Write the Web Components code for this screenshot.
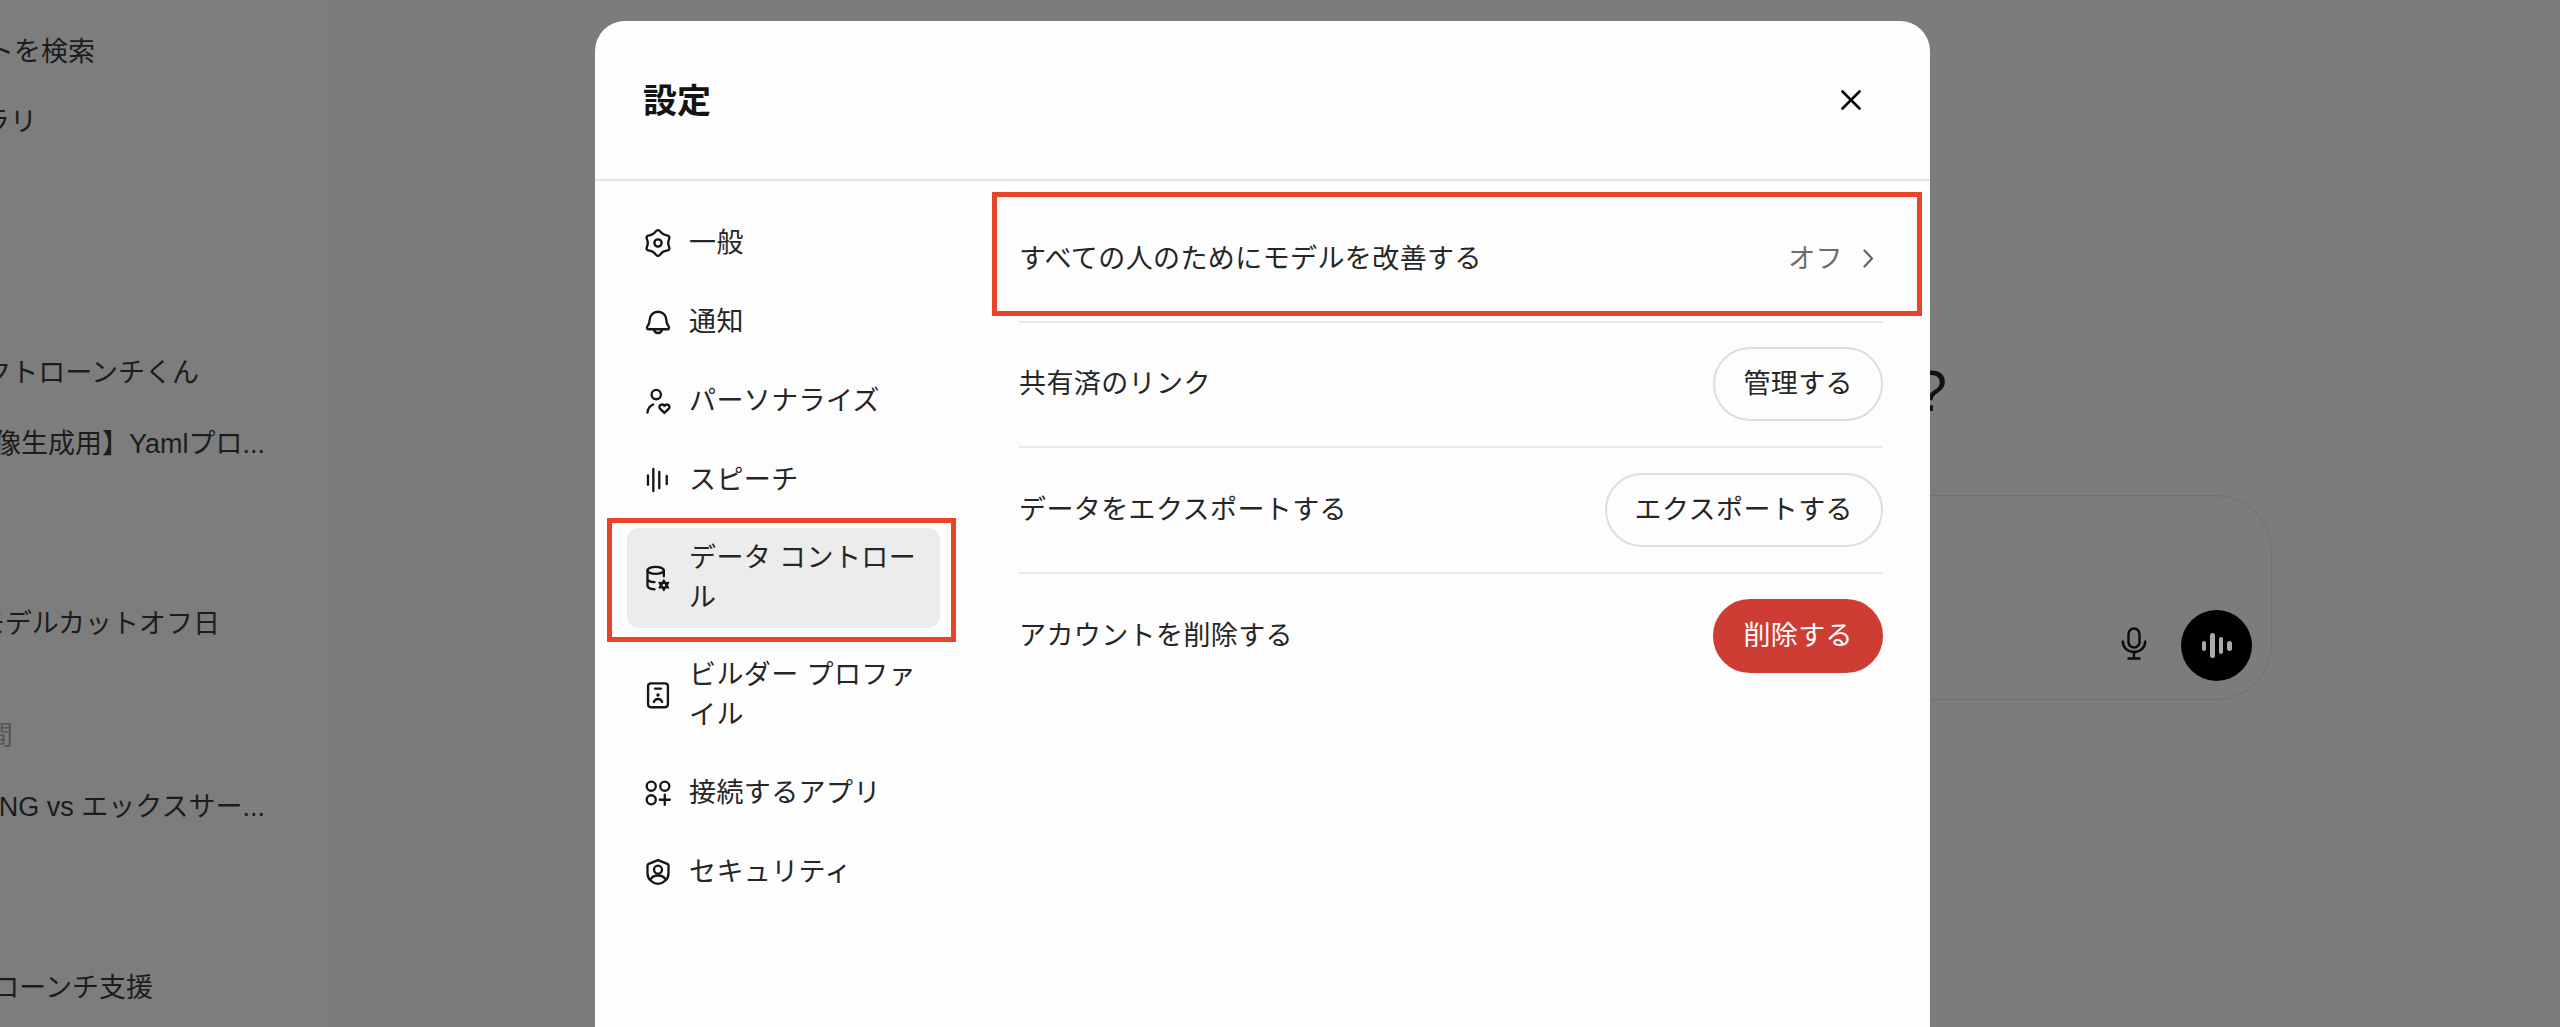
<!DOCTYPE html>
<html lang="ja">
<head>
<meta charset="utf-8">
<title>設定</title>
<style>
  html, body { margin: 0; height: 100%; overflow: hidden; background: #7c7c7c; }
  body { font-family: "Liberation Sans", "Noto Sans CJK JP", sans-serif; color: #1c1c1c; }
</style>
</head>
<body>
<app-shell>
  <chat-sidebar slot="side">
    <side-row end="95" top="32">チャットを検索</side-row>
    <side-row end="37" top="30">ライブラリ</side-row>
    <side-row end="199" top="211">プロダクトローンチくん</side-row>
    <side-row end="265" top="31">【画像生成用】Yamlプロ...</side-row>
    <side-row end="220" top="140">AIモデルカットオフ日</side-row>
    <side-row end="13" top="72" muted>過去30日間</side-row>
    <side-row end="265" top="31">SWING vs エックスサー...</side-row>
    <side-row end="153" top="141">プロダクトローンチ支援</side-row>
  </chat-sidebar>
  <chat-main slot="main"></chat-main>
  <settings-modal slot="modal">
    <nav-item icon="gear">一般</nav-item>
    <nav-item icon="bell">通知</nav-item>
    <nav-item icon="person">パーソナライズ</nav-item>
    <nav-item icon="speech">スピーチ</nav-item>
    <nav-item icon="data" selected>データ コントロール</nav-item>
    <nav-item icon="builder">ビルダー プロファイル</nav-item>
    <nav-item icon="apps">接続するアプリ</nav-item>
    <nav-item icon="shield">セキュリティ</nav-item>

    <setting-row slot="rows">すべての人のためにモデルを改善する<value-link slot="action">オフ</value-link></setting-row>
    <setting-row slot="rows">共有済のリンク<pill-button slot="action">管理する</pill-button></setting-row>
    <setting-row slot="rows">データをエクスポートする<pill-button slot="action">エクスポートする</pill-button></setting-row>
    <setting-row slot="rows" last>アカウントを削除する<pill-button slot="action" danger>削除する</pill-button></setting-row>
  </settings-modal>
</app-shell>

<script>
// 歯車の花びら形をつくる
function flowerPath() {
  const pts = [];
  for (let i = 0; i < 12; i++) {
    const a = (-90 + i * 30) * Math.PI / 180;
    const r = i % 2 ? 8.1 : 12.4;
    pts.push([12 + r * Math.cos(a), 12 + r * Math.sin(a)]);
  }
  const mid = (p, q) => ((p[0] + q[0]) / 2).toFixed(2) + ' ' + ((p[1] + q[1]) / 2).toFixed(2);
  let d = 'M' + mid(pts[11], pts[0]);
  pts.forEach((p, i) => {
    d += 'Q' + p[0].toFixed(2) + ' ' + p[1].toFixed(2) + ' ' + mid(p, pts[(i + 1) % 12]);
  });
  return d + 'Z';
}

const ICONS = {
  gear: `<path d="${flowerPath()}"/><circle cx="12" cy="12" r="3.1"/>`,
  bell: `<path d="M12 3.2a7.2 7.2 0 0 0-7.2 7.2c0 2.7-1 4.2-2 5.6-.7 1-.1 2.2 1 2.2h16.4c1.1 0 1.7-1.200 1-2.200-1-1.400-2-2.900-2-5.600A7.200 7.200 0 0 0 12 3.200z"/><path d="M8.600 18.400c.3 2 1.700 3 3.400 3s3.100-1 3.400-3"/>`,
  person: `<circle cx="10.500" cy="6.500" r="4"/><path d="M3 22c.2-3.300 1.900-5.800 4.800-7"/><path d="M17.500 22.200l-3.800-3.700c-2-2.200 1.900-5.100 3.800-2.300 1.900-2.800 5.800.1 3.800 2.300z"/>`,
  speech: `<path d="M3.400 8v8M8 2.500v19M13.100 5v14M19.500 8.500v7"/>`,
  data: `<ellipse cx="10" cy="5.500" rx="7" ry="3"/><path d="M3 5.500v13c0 1.800 2.400 3 6 3.200M17 5.500v5M3 12.500c0 1.700 2.400 3 6 3.100"/><path d="M17 13.600l1.500 2.300 2.700-.1-1.200 2.400 1.200 2.400-2.700-.2L17 22.900l-1.500-2.500-2.700.2 1.200-2.400-1.200-2.400 2.700.1z" fill="currentColor" stroke-width="1"/><circle cx="17" cy="18.200" r="1.100" fill="#ececec" stroke="none"/>`,
  builder: `<rect x="3.500" y="2" width="17" height="20.500" rx="2.500"/><path d="M9.500 6.500h5"/><circle cx="12" cy="12" r="1.500" fill="currentColor" stroke="none"/><path d="M8.500 18c.5-1.800 1.800-2.600 3.500-2.600s3 .8 3.500 2.600"/>`,
  apps: `<circle cx="6.200" cy="6.200" r="3.900"/><circle cx="17.800" cy="6.200" r="3.900"/><circle cx="6.200" cy="17.800" r="3.900"/><path d="M17.800 13.500v8.600M13.500 17.800h8.600"/>`,
  shield: `<path d="M12 1.800l8 3.200c.6.200 1 .8 1 1.500v6.500c0 5-4 8.700-9 9.200-5-.5-9-4.200-9-9.200V6.500c0-.7.4-1.300 1-1.500z"/><circle cx="12" cy="10" r="3.400"/><path d="M5.800 18c1.200-2 3.500-3 6.200-3s5 1 6.200 3"/>`
};

class AppShell extends HTMLElement {
  constructor() {
    super();
    this.attachShadow({ mode: 'open' });
    this.shadowRoot.innerHTML = `
      <style>
        :host { display: flex; width: 2560px; height: 1027px; position: relative; overflow: hidden; }
      </style>
      <slot name="side"></slot>
      <slot name="main"></slot>
      <slot name="modal"></slot>
    `;
  }
}

class ChatSidebar extends HTMLElement {
  constructor() {
    super();
    this.attachShadow({ mode: 'open' });
    this.shadowRoot.innerHTML = `
      <style>
        :host {
          display: flex; flex-direction: column; flex: none;
          width: 329px; height: 100%;
          background: #7d7d7d; border-right: 1px solid #767676;
          overflow: hidden;
        }
      </style>
      <slot></slot>
    `;
  }
}

// 行の右端(end)と上の余白(top)で置く。左側は画面外に切れる
class SideRow extends HTMLElement {
  constructor() {
    super();
    this.attachShadow({ mode: 'open' });
    this.shadowRoot.innerHTML = `
      <style>
        :host {
          display: flex; justify-content: flex-end; flex: none;
          height: 40px; line-height: 40px; font-size: 27px;
          white-space: nowrap; color: #1c1c1c;
        }
        :host([muted]) { color: #565656; }
      </style>
      <slot></slot>
    `;
  }
  connectedCallback() {
    this.style.width = this.getAttribute('end') + 'px';
    this.style.marginTop = this.getAttribute('top') + 'px';
  }
}

class ChatMain extends HTMLElement {
  constructor() {
    super();
    this.attachShadow({ mode: 'open' });
    this.shadowRoot.innerHTML = `
      <style>
        :host {
          display: flex; flex-direction: column; align-items: center;
          flex: 1; padding-top: 359px; box-sizing: border-box;
        }
        .title {
          width: 1004px; display: flex; justify-content: flex-end;
          height: 64px; line-height: 64px; font-size: 57px; color: #111;
        }
        .composer {
          width: 1654px; height: 205px; margin-top: 72px; box-sizing: border-box;
          border: 1.500px solid #707070; border-radius: 56px;
          display: flex; justify-content: flex-end; align-items: flex-end; gap: 34px;
          padding: 0 19px 18px 0;
        }
        .mic { width: 26px; height: 33px; margin-bottom: 21px; display: block; }
        .voice {
          width: 71px; height: 71px; border-radius: 50%; background: #000;
          display: flex; align-items: center; justify-content: center; gap: 4px;
        }
        .voice i { display: block; width: 4.500px; background: #aaa; border-radius: 3px; }
      </style>
      <div class="title">?</div>
      <div class="composer">
        <svg class="mic" viewBox="0 0 26 33" fill="none" stroke="#0a0a0a" stroke-width="2.400" stroke-linecap="round">
          <rect x="7.500" y="1.500" width="11" height="19" rx="5.500"/>
          <path d="M1.800 14.500c0 6.500 5 10.500 11.200 10.500s11.200-4 11.200-10.500"/>
          <path d="M13 25v6M7.500 31.500h11"/>
        </svg>
        <div class="voice"><i style="height:10px"></i><i style="height:25px"></i><i style="height:17px"></i><i style="height:10px"></i></div>
      </div>
    `;
  }
}

class SettingsModal extends HTMLElement {
  constructor() {
    super();
    this.attachShadow({ mode: 'open' });
    this.shadowRoot.innerHTML = `
      <style>
        :host {
          display: block; position: absolute; left: 595px; top: 21px;
          width: 1335px; height: 1040px;
          background: #fdfdfd; border-radius: 30px;
        }
        header {
          height: 158px; box-sizing: content-box; border-bottom: 2px solid #e6e6e6;
          display: flex; align-items: center; justify-content: space-between;
          padding: 0 69px 0 48px;
        }
        h2 { margin: 2px 0 0; font-size: 34px; font-weight: 700; color: #141414; line-height: 1; }
        .close { width: 20px; height: 20px; display: block; }
        .body { display: flex; }
        nav {
          width: 313px; margin-left: 32px; padding-top: 31px;
          display: flex; flex-direction: column; gap: 17px;
        }
        .rows { width: 864px; margin-left: 79px; padding-top: 16px; display: flex; flex-direction: column; }
        .mark { position: absolute; border: 5px solid #e8442a; box-sizing: border-box; pointer-events: none; }
        .mark.nav { left: 12px; top: 497px; width: 349px; height: 124px; }
        .mark.row { left: 397px; top: 171px; width: 930px; height: 124px; }
      </style>
      <header>
        <h2>設定</h2>
        <svg class="close" viewBox="0 0 20 20" fill="none" stroke="#0a0a0a" stroke-width="2.600" stroke-linecap="round"><path d="M1.500 1.500l17 17M18.500 1.500l-17 17"/></svg>
      </header>
      <div class="body">
        <nav><slot></slot></nav>
        <div class="rows"><slot name="rows"></slot></div>
      </div>
      <div class="mark nav"></div>
      <div class="mark row"></div>
    `;
  }
}

class NavItem extends HTMLElement {
  constructor() {
    super();
    this.attachShadow({ mode: 'open' });
    this.shadowRoot.innerHTML = `
      <style>
        :host {
          display: flex; align-items: center; gap: 17px; box-sizing: border-box;
          min-height: 62px; padding: 10px 14px 10px 17px; border-radius: 12px;
          font-size: 27px; line-height: 40px; letter-spacing: .4px; color: #262626;
        }
        :host([selected]) { background: #ececec; }
        svg { width: 28px; height: 28px; flex: none; display: block; color: #161616; }
        span { display: block; min-width: 0; }
      </style>
      <svg viewBox="0 0 24 24" fill="none" stroke="currentColor" stroke-width="2" stroke-linecap="round" stroke-linejoin="round"></svg>
      <span><slot></slot></span>
    `;
  }
  connectedCallback() {
    this.shadowRoot.querySelector('svg').innerHTML = ICONS[this.getAttribute('icon')] || '';
  }
}

class SettingRow extends HTMLElement {
  constructor() {
    super();
    this.attachShadow({ mode: 'open' });
    this.shadowRoot.innerHTML = `
      <style>
        :host {
          display: flex; align-items: center; justify-content: space-between;
          height: 125.500px; box-sizing: border-box; border-bottom: 2px solid #e8e8e8;
          font-size: 27px; line-height: 40px; letter-spacing: .4px; color: #262626;
        }
        :host([last]) { border-bottom: 0; }
      </style>
      <slot></slot>
      <slot name="action"></slot>
    `;
  }
}

class ValueLink extends HTMLElement {
  constructor() {
    super();
    this.attachShadow({ mode: 'open' });
    this.shadowRoot.innerHTML = `
      <style>
        :host { display: flex; align-items: center; gap: 20px; color: #6e6e6e; padding-right: 10px; }
        svg { width: 10px; height: 19px; display: block; }
      </style>
      <slot></slot>
      <svg viewBox="0 0 10 19" fill="none" stroke="#666" stroke-width="2.200" stroke-linecap="round" stroke-linejoin="round"><path d="M1.500 1.500l7.500 8-7.500 8"/></svg>
    `;
  }
}

class PillButton extends HTMLElement {
  constructor() {
    super();
    this.attachShadow({ mode: 'open' });
    this.shadowRoot.innerHTML = `
      <style>
        :host {
          display: flex; align-items: center; box-sizing: border-box;
          height: 74px; padding: 0 28px; border-radius: 37px;
          border: 2px solid #dedede; background: #fdfdfd; color: #262626;
          font-size: 27px; white-space: nowrap;
        }
        :host([danger]) { background: #ce3d33; border-color: #ce3d33; color: #fff; }
      </style>
      <slot></slot>
    `;
  }
}

customElements.define('app-shell', AppShell);
customElements.define('chat-sidebar', ChatSidebar);
customElements.define('side-row', SideRow);
customElements.define('chat-main', ChatMain);
customElements.define('settings-modal', SettingsModal);
customElements.define('nav-item', NavItem);
customElements.define('setting-row', SettingRow);
customElements.define('value-link', ValueLink);
customElements.define('pill-button', PillButton);
</script>
</body>
</html>
